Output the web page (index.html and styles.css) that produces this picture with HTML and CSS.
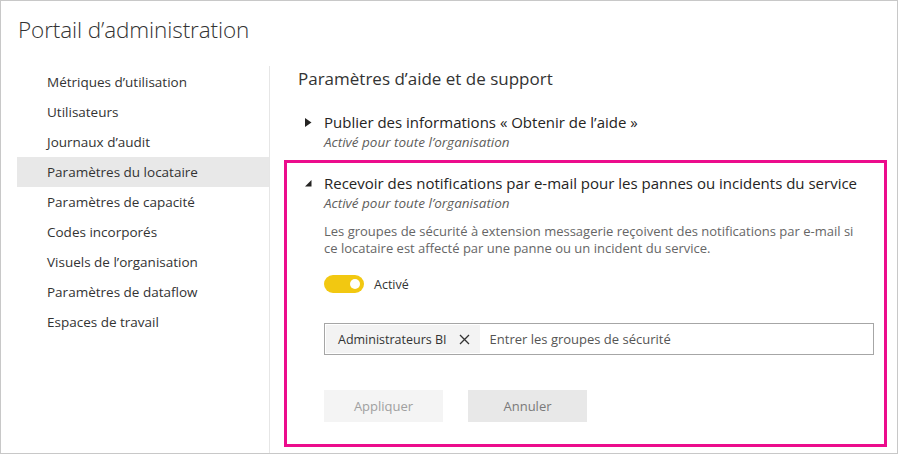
FILE: index.html
```html
<!DOCTYPE html>
<html lang="fr">
<head>
<meta charset="utf-8">
<title>Portail d'administration</title>
<link rel="stylesheet" href="styles.css">
</head>
<body>
<div class="frame">
  <header class="header">
    <h1 class="title">Portail d’administration</h1>
  </header>
  <div class="main">
    <nav class="sidebar">
      <ul class="nav">
        <li class="nav-item">Métriques d’utilisation</li>
        <li class="nav-item">Utilisateurs</li>
        <li class="nav-item">Journaux d’audit</li>
        <li class="nav-item is-active">Paramètres du locataire</li>
        <li class="nav-item">Paramètres de capacité</li>
        <li class="nav-item">Codes incorporés</li>
        <li class="nav-item">Visuels de l’organisation</li>
        <li class="nav-item">Paramètres de dataflow</li>
        <li class="nav-item">Espaces de travail</li>
      </ul>
    </nav>
    <section class="content">
      <h2 class="section-title">Paramètres d’aide et de support</h2>

      <div class="setting">
        <span class="caret">
          <svg width="7" height="9" viewBox="0 0 7 9"><polygon points="0,0 6.5,4.5 0,9" fill="#252423"/></svg>
        </span>
        <div class="setting-body">
          <div class="setting-name">Publier des informations « Obtenir de l’aide »</div>
          <div class="setting-state">Activé pour toute l’organisation</div>
        </div>
      </div>

      <div class="setting is-open">
        <span class="caret">
          <svg width="7" height="7" viewBox="0 0 7 7"><polygon points="6.5,0 6.5,6.5 0,6.5" fill="#252423"/></svg>
        </span>
        <div class="setting-body">
          <div class="setting-name">Recevoir des notifications par e-mail pour les pannes ou incidents du service</div>
          <div class="setting-state">Activé pour toute l’organisation</div>
          <p class="setting-desc">Les groupes de sécurité à extension messagerie reçoivent des notifications par e-mail si ce locataire est affecté par une panne ou un incident du service.</p>
          <div class="toggle-row">
            <span class="toggle"><span class="knob"></span></span>
            <span class="toggle-label">Activé</span>
          </div>
          <div class="picker">
            <span class="chip">Administrateurs BI
              <svg class="chip-x" width="11" height="11" viewBox="0 0 11 11"><path d="M1 1 L10 10 M10 1 L1 10" stroke="#333" stroke-width="1.3" fill="none"/></svg>
            </span>
            <span class="placeholder">Entrer les groupes de sécurité</span>
          </div>
          <div class="actions">
            <button class="btn btn-apply">Appliquer</button>
            <button class="btn btn-cancel">Annuler</button>
          </div>
        </div>
      </div>
    </section>
  </div>
</div>
</body>
</html>
```

FILE: styles.css
```css
* { box-sizing: border-box; }
html, body { margin: 0; padding: 0; background: #fff; }
body {
  font-family: "Open Sans", "Noto Sans", sans-serif;
  color: #333;
}
.frame {
  width: 898px;
  height: 454px;
  border: 1px solid #c8c8c8;
  display: flex;
  flex-direction: column;
  overflow: hidden;
}
.header {
  height: 65px;
  padding-left: 17px;
  display: flex;
  align-items: center;
}
.title {
  margin: 0;
  font-size: 22.5px;
  font-weight: 300;
  color: #333;
  letter-spacing: -0.1px;
  padding-bottom: 8px;
}
.main {
  flex: 1;
  display: flex;
}
.sidebar {
  width: 269px;
  border-right: 1px solid #e6e6e6;
  padding-left: 16px;
}
.nav {
  list-style: none;
  margin: 0;
  padding: 1px 0 0;
}
.nav-item {
  height: 30px;
  line-height: 30px;
  padding-left: 30px;
  font-size: 13.5px;
  color: #333;
}
.nav-item.is-active { background: #e8e8e8; }

.content {
  flex: 1;
  padding: 0 10px 0 14px;
}
.section-title {
  margin: 0;
  padding: 2px 0 0 14px;
  height: 33px;
  line-height: 22px;
  font-size: 17px;
  font-weight: 400;
  color: #333;
}
.setting {
  display: grid;
  grid-template-columns: 37px 1fr;
  border: 3px solid transparent;
  padding: 10px 0 4px;
}
.setting.is-open {
  border-color: #ec0c8c;
  padding: 10px 10px 22px 0;
}
.caret {
  display: flex;
  justify-content: flex-end;
  padding-right: 12px;
  height: 20px;
  align-items: center;
}
.setting-name {
  font-size: 15px;
  line-height: 20px;
  color: #252423;
}
.setting-state {
  font-size: 13.5px;
  line-height: 21px;
  font-style: italic;
  color: #605e5c;
}
.setting-desc {
  margin: 9px 0 0;
  max-width: 540px;
  font-size: 13px;
  line-height: 17px;
  color: #666;
}
.toggle-row {
  margin-top: 17px;
  height: 20px;
  display: flex;
  align-items: center;
  gap: 10px;
}
.toggle {
  width: 40px;
  height: 18px;
  border-radius: 9px;
  background: #f2c811;
  display: flex;
  align-items: center;
  justify-content: flex-end;
  padding-right: 4px;
}
.knob {
  width: 10px;
  height: 10px;
  border-radius: 50%;
  background: #fff;
}
.toggle-label {
  font-size: 12.5px;
  color: #333;
}
.picker {
  margin-top: 29px;
  height: 32px;
  border: 1px solid #a6a6a6;
  display: flex;
  align-items: stretch;
  padding: 1px;
}
.chip {
  background: #f3f3f3;
  display: flex;
  align-items: center;
  gap: 12px;
  padding: 0 10px 0 12px;
  font-size: 12.5px;
  color: #333;
}
.chip-x { display: block; }
.placeholder {
  display: flex;
  align-items: center;
  padding-left: 10px;
  font-size: 13px;
  color: #555;
}
.actions {
  margin-top: 35px;
  display: flex;
  gap: 25px;
}
.btn {
  width: 119px;
  height: 32px;
  border: 0;
  font-family: inherit;
  font-size: 13px;
  padding: 0;
}
.btn-apply { background: #f4f4f4; color: #a0a0a0; }
.btn-cancel { background: #e8e8e8; color: #7a7a7a; }
```
